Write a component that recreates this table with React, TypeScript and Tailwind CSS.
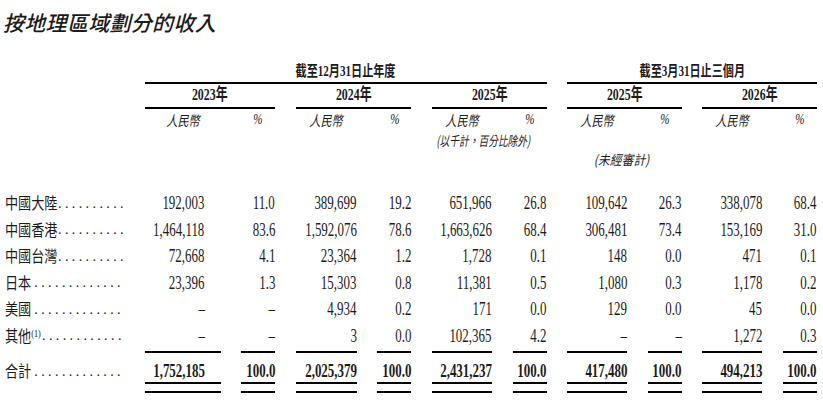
import React from "react"

const GRID =
    "grid grid-cols-[124px_76px_34px_61px_34px_60px_34px_60px_34px_60px_34px] gap-x-[20.6px]"

type Row = {label: string; box: string; dots: number; sup?: boolean; values: string[]}

const rows: Row[] = [
    {label: "中國大陸", box: "w-[53px]", dots: 10, values: ["192,003", "11.0", "389,699", "19.2", "651,966", "26.8", "109,642", "26.3", "338,078", "68.4"]},
    {label: "中國香港", box: "w-[53px]", dots: 10, values: ["1,464,118", "83.6", "1,592,076", "78.6", "1,663,626", "68.4", "306,481", "73.4", "153,169", "31.0"]},
    {label: "中國台灣", box: "w-[53px]", dots: 10, values: ["72,668", "4.1", "23,364", "1.2", "1,728", "0.1", "148", "0.0", "471", "0.1"]},
    {label: "日本", box: "w-[27px]", dots: 13, values: ["23,396", "1.3", "15,303", "0.8", "11,381", "0.5", "1,080", "0.3", "1,178", "0.2"]},
    {label: "美國", box: "w-[27px]", dots: 13, values: ["–", "–", "4,934", "0.2", "171", "0.0", "129", "0.0", "45", "0.0"]},
    {label: "其他", box: "w-[37px]", dots: 12, sup: true, values: ["–", "–", "3", "0.0", "102,365", "4.2", "–", "–", "1,272", "0.3"]},
]

const total = ["1,752,185", "100.0", "2,025,379", "100.0", "2,431,237", "100.0", "417,480", "100.0", "494,213", "100.0"]

function Label({text, box, dots, sup}: {text: string; box: string; dots: number; sup?: boolean}) {
    return (
        <div className="flex items-center justify-between pl-[5px]">
            <span className={"inline-block " + box}>
                <span className="inline-block origin-left scale-x-[0.82] whitespace-nowrap font-['Noto_Sans_CJK_TC',sans-serif] text-[16px] leading-[20px]">
                    {text}
                    {sup && <sup className="font-['Liberation_Serif',serif] text-[10px]">(1)</sup>}
                </span>
            </span>
            <span className="whitespace-nowrap font-['Liberation_Serif',serif] text-[14px] tracking-[3.4px]">
                {".".repeat(dots)}
            </span>
        </div>
    )
}

function Num({value, bold, pad}: {value: string; bold?: boolean; pad?: boolean}) {
    return (
        <div className={pad ? "flex justify-end pr-[16px]" : "flex justify-end"}>
            <span
                className={
                    bold
                        ? "inline-block origin-right scale-x-[0.72] whitespace-nowrap font-['Liberation_Serif',serif] text-[18px] leading-[20px] font-bold"
                        : "inline-block origin-right scale-x-[0.72] whitespace-nowrap font-['Liberation_Serif',serif] text-[18px] leading-[20px]"
                }
            >
                {value}
            </span>
        </div>
    )
}

const years = ["2023年", "2024年", "2025年", "2025年", "2026年"]

export default function App() {
    return (
        <div className="w-[823px] h-[404px] bg-white text-[#1c1a1b] overflow-hidden">
            {/* Title */}
            <div className="h-[44px] flex items-center pl-[3px]">
                <h1 className="italic font-medium font-['Noto_Sans_CJK_TC',sans-serif] text-[21px] leading-none tracking-[0.3px]">
                    按地理區域劃分的收入
                </h1>
            </div>

            {/* Period headers */}
            <div className={GRID}>
                <div className="col-start-2 col-span-6 h-[40px] flex items-end justify-center pb-[2px] border-b-2 border-black">
                    <span className="inline-block scale-x-[0.74] whitespace-nowrap font-bold font-['Liberation_Serif','Noto_Sans_CJK_TC',serif] text-[15px] leading-[18px]">
                        截至12月31日止年度
                    </span>
                </div>
                <div className="col-start-8 col-span-4 h-[40px] flex items-end justify-center pb-[2px] border-b-2 border-black">
                    <span className="inline-block scale-x-[0.74] whitespace-nowrap font-bold font-['Liberation_Serif','Noto_Sans_CJK_TC',serif] text-[15px] leading-[18px]">
                        截至3月31日止三個月
                    </span>
                </div>
            </div>

            {/* Years */}
            <div className={GRID}>
                <div/>
                {years.map((y, i) => (
                    <div
                        key={i}
                        className="col-span-2 h-[25px] flex items-end justify-center pb-[3px] border-b-2 border-black"
                    >
                        <span className="inline-block scale-x-[0.72] whitespace-nowrap font-bold font-['Liberation_Serif','Noto_Sans_CJK_TC',serif] text-[16.5px] leading-[18px]">
                            {y}
                        </span>
                    </div>
                ))}
            </div>

            {/* RMB / % */}
            <div className={GRID}>
                <div/>
                {years.map((_, i) => (
                    <React.Fragment key={i}>
                        <div className="h-[22px] flex items-center justify-center">
                            <span className="inline-block scale-x-[0.8] whitespace-nowrap italic font-['Noto_Sans_CJK_TC',sans-serif] text-[14px] leading-[16px]">
                                人民幣
                            </span>
                        </div>
                        <div className="h-[22px] flex items-center justify-center">
                            <span className="inline-block scale-x-[0.8] italic font-['Liberation_Serif',serif] text-[14px] leading-[16px]">
                                %
                            </span>
                        </div>
                    </React.Fragment>
                ))}
            </div>

            <div className={GRID}>
                <div className="col-start-6 col-span-2 h-[18px] flex items-center justify-center pr-[12px]">
                    <span className="inline-block scale-x-[0.72] whitespace-nowrap italic font-['Noto_Sans_CJK_TC',sans-serif] text-[13.5px] leading-[16px]">
                        (以千計，百分比除外)
                    </span>
                </div>
            </div>

            <div className={GRID}>
                <div className="col-start-8 col-span-2 h-[20px] flex items-center justify-center pr-[6px]">
                    <span className="inline-block scale-x-[0.88] whitespace-nowrap italic font-['Noto_Sans_CJK_TC',sans-serif] text-[13.5px] leading-[16px]">
                        (未經審計)
                    </span>
                </div>
            </div>

            {/* Data rows */}
            <div className="mt-[21px]">
                {rows.map((r) => (
                    <div key={r.label} className={GRID + " h-[26.5px] items-center"}>
                        <Label text={r.label} box={r.box} dots={r.dots} sup={r.sup}/>
                        {r.values.map((v, i) => (
                            <Num key={i} value={v} pad={i === 0}/>
                        ))}
                    </div>
                ))}

                {/* Total */}
                <div className={GRID + " items-start"}>
                    <div className="mt-[4px] h-[29px] pt-[7px] flex flex-col justify-center">
                        <Label text="合計" box="w-[27px]" dots={13}/>
                    </div>
                    {total.map((v, i) => (
                        <div key={i} className="mt-[2px] flex flex-col">
                            <div className="h-[2px] bg-black"/>
                            <div className="h-[29px] pt-[7px] flex flex-col justify-center">
                                <Num value={v} bold pad={i === 0}/>
                            </div>
                            <div className="h-[2px] bg-black"/>
                            <div className="h-[7px]"/>
                            <div className="h-[2px] bg-black"/>
                        </div>
                    ))}
                </div>
            </div>
        </div>
    )
}
